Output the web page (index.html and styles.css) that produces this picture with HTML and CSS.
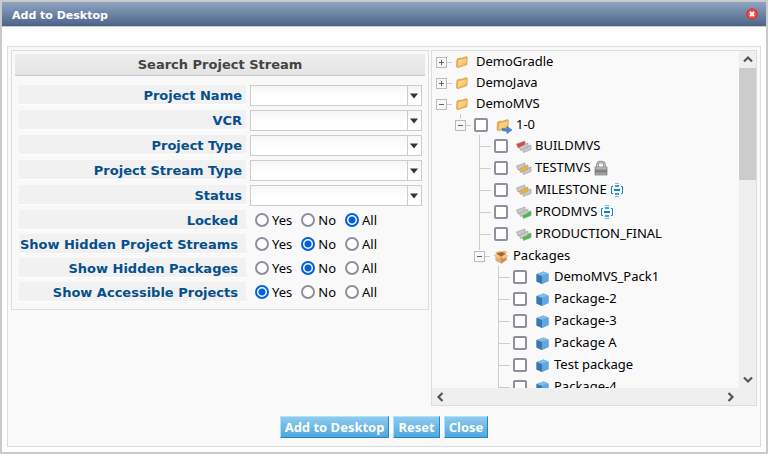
FILE: index.html
```html
<!DOCTYPE html>
<html lang="en">
<head>
<meta charset="utf-8">
<title>Add to Desktop</title>
<link rel="stylesheet" href="styles.css">
</head>
<body>
<svg class="sprites" aria-hidden="true">
  <defs>
    <linearGradient id="gFolder" x1="0" y1="0" x2="1" y2="1"><stop offset="0" stop-color="#ffe9b0"/><stop offset="1" stop-color="#f0b04c"/></linearGradient>
    <linearGradient id="gLock" x1="0" y1="0" x2="0" y2="1"><stop offset="0" stop-color="#d8d8d8"/><stop offset=".5" stop-color="#777"/><stop offset="1" stop-color="#bbb"/></linearGradient>
    <symbol id="folder" viewBox="0 0 16 16">
      <path d="M2 4 L5 3 L6 3.500 L11.500 1.500 L12 9.500 L3 12.500 L1.500 11.500Z" fill="#eeb65a" stroke="#d99a3c" stroke-width=".7"/>
      <path d="M3 5 L12.500 2.500 L11.500 9.500 L2 12.500Z" fill="url(#gFolder)" stroke="#e0a048" stroke-width=".7"/>
    </symbol>
    <symbol id="folder-link" viewBox="0 0 16 16">
      <path d="M1.500 4 L5 3 L6 3.500 L11.500 1.500 L12 9.500 L3 12.500 L1 11.500Z" fill="#eeb65a" stroke="#d99a3c" stroke-width=".7"/>
      <path d="M3.500 5 L12.500 2.500 L11.500 9.500 L1.500 12.500Z" fill="url(#gFolder)" stroke="#e0a048" stroke-width=".7"/>
      <path d="M6 10.500 L11 11 L11 8.500 L16 12 L11 15.500 L11 13.500 L6 12.500Z" fill="#4a86d8" stroke="#2c62b4" stroke-width=".5"/>
    </symbol>
    <symbol id="bars" viewBox="0 0 16 16">
      <path class="b3" d="M6 9.500 L15 6 V10.500 L7.500 13.500Z"/>
      <path class="b2" d="M3 7.500 L12 4 V8 L4.500 11.500Z"/>
      <path class="b1" d="M.5 5 L9 2 V5.500 L2 9Z"/>
    </symbol>
    <symbol id="cube" viewBox="0 0 16 16">
      <path d="M1.500 4 L8.500 1.500 L13.500 3.500 V11 L7 14 L1.500 11.500Z" fill="#5a9fd8"/>
      <path d="M1.500 4 L8.500 1.500 L13.500 3.500 L7 6Z" fill="#80bdec"/>
      <path d="M1.500 4 L7 6 V14 L1.500 11.500Z" fill="#3a77b0"/>
      <path d="M7 6 L13.500 3.500 V11 L7 14Z" fill="#62a8e0"/>
    </symbol>
    <symbol id="box" viewBox="0 0 16 16">
      <path d="M2.500 6 L7 8 L13.500 6 V11 L8 14.500 L2.500 11.500Z" fill="#e8a565"/>
      <path d="M8 8.500 L13.500 6 V11 L8 14.500Z" fill="#d98b45"/>
      <path d="M3 4.500 L9 2.500 L13 5 L8 8Z" fill="#a8662e"/>
      <path d="M3 5 L8 8 L5.500 9.500 L.5 6.500Z M13 5 L8 8 L10.500 10 L15.500 7Z" fill="#f6c18a"/>
      <path d="M3 4.500 L8 3 L6.500 2 L2 3.500Z M12.500 4.500 L9 3 L11 1.500 L14.500 3Z" fill="#efb076"/>
    </symbol>
    <symbol id="lock" viewBox="0 0 16 16">
      <path d="M4.500 8 V5 Q4.500 2 8 2 Q11.500 2 11.500 5 V8" fill="none" stroke="#888" stroke-width="2.600"/>
      <path d="M4.500 8 V5 Q4.500 2 8 2 Q11.500 2 11.500 5 V8" fill="none" stroke="#ddd" stroke-width=".8"/>
      <rect x="2" y="7" width="12" height="8" fill="url(#gLock)" stroke="#777" stroke-width=".7"/>
    </symbol>
    <symbol id="milestone" viewBox="0 0 16 16">
      <path d="M4 4.500 H2.500 V11.500 H4 M12 4.500 H13.500 V11.500 H12" fill="none" stroke="#1680cc" stroke-width="1"/>
      <path d="M6 1.500 H10 M6 14.500 H10" stroke="#7abbe8"/>
      <path d="M6 4 H10 M6 12 H10" stroke="#3c9de0" stroke-width="2"/>
      <path d="M5 8 H11" stroke="#1680cc" stroke-width="2"/>
    </symbol>
    <symbol id="caret" viewBox="0 0 8 6"><path d="M0 .5 H8 L4 5.500Z" fill="#333"/></symbol>
    <symbol id="up" viewBox="0 0 10 10"><path d="M1 7.500 L5 3.500 L9 7.500" fill="none" stroke="#555" stroke-width="2.200"/></symbol>
  </defs>
</svg>
<main class="window">
  <header class="titlebar">
    <h1>Add to Desktop</h1>
    <button class="close" aria-label="Close window" type="button">
      <svg viewBox="0 0 12 12"><circle cx="6" cy="6" r="5.800" fill="#d8322c"/><circle cx="6" cy="6" r="4.500" fill="#e85550"/><path d="M4 4 L8 8 M8 4 L4 8" stroke="#fff" stroke-width="1.800"/></svg>
    </button>
  </header>
  <form class="panel">
    <div class="columns">
      <section class="search">
        <h2>Search Project Stream</h2>
        <div class="fields">
          <label class="name" for="f1">Project Name</label><div class="combo"><select id="f1"><option></option></select><svg><use href="#caret"/></svg></div>
          <label class="name" for="f2">VCR</label><div class="combo"><select id="f2"><option></option></select><svg><use href="#caret"/></svg></div>
          <label class="name" for="f3">Project Type</label><div class="combo"><select id="f3"><option></option></select><svg><use href="#caret"/></svg></div>
          <label class="name" for="f4">Project Stream Type</label><div class="combo"><select id="f4"><option></option></select><svg><use href="#caret"/></svg></div>
          <label class="name" for="f5">Status</label><div class="combo"><select id="f5"><option></option></select><svg><use href="#caret"/></svg></div>
          <span class="name choice" id="n1">Locked</span><div class="radios" role="radiogroup" aria-labelledby="n1"><label><input type="radio" name="r1">Yes</label><label><input type="radio" name="r1">No</label><label><input type="radio" name="r1" checked>All</label></div>
          <span class="name choice" id="n2">Show Hidden Project Streams</span><div class="radios" role="radiogroup" aria-labelledby="n2"><label><input type="radio" name="r2">Yes</label><label><input type="radio" name="r2" checked>No</label><label><input type="radio" name="r2">All</label></div>
          <span class="name choice" id="n3">Show Hidden Packages</span><div class="radios" role="radiogroup" aria-labelledby="n3"><label><input type="radio" name="r3">Yes</label><label><input type="radio" name="r3" checked>No</label><label><input type="radio" name="r3">All</label></div>
          <span class="name choice" id="n4">Show Accessible Projects</span><div class="radios" role="radiogroup" aria-labelledby="n4"><label><input type="radio" name="r4" checked>Yes</label><label><input type="radio" name="r4">No</label><label><input type="radio" name="r4">All</label></div>
        </div>
      </section>
      <section class="browser">
        <div class="view">
          <ul class="tree">
            <li><div class="node"><button type="button" class="toggle plus" aria-label="Expand"></button><svg class="icon"><use href="#folder"/></svg><span class="text wide">DemoGradle</span></div></li>
            <li><div class="node"><button type="button" class="toggle plus" aria-label="Expand"></button><svg class="icon"><use href="#folder"/></svg><span class="text wide">DemoJava</span></div></li>
            <li><div class="node"><button type="button" class="toggle" aria-label="Collapse"></button><svg class="icon"><use href="#folder"/></svg><span class="text wide">DemoMVS</span></div>
              <ul>
                <li><div class="node stem"><button type="button" class="toggle" aria-label="Collapse"></button><label><input type="checkbox"><svg class="icon"><use href="#folder-link"/></svg><span class="text wide">1-0</span></label></div>
                  <ul>
                    <li><div class="node leaf"><label><input type="checkbox"><svg class="icon red"><use href="#bars"/></svg><span class="text">BUILDMVS</span></label></div></li>
                    <li><div class="node leaf"><label><input type="checkbox"><svg class="icon amber"><use href="#bars"/></svg><span class="text">TESTMVS</span></label><svg class="icon"><use href="#lock"/></svg></div></li>
                    <li><div class="node leaf"><label><input type="checkbox"><svg class="icon amber"><use href="#bars"/></svg><span class="text">MILESTONE</span></label><svg class="icon"><use href="#milestone"/></svg></div></li>
                    <li><div class="node leaf"><label><input type="checkbox"><svg class="icon green"><use href="#bars"/></svg><span class="text">PRODMVS</span></label><svg class="icon"><use href="#milestone"/></svg></div></li>
                    <li><div class="node leaf"><label><input type="checkbox"><svg class="icon green"><use href="#bars"/></svg><span class="text">PRODUCTION_FINAL</span></label></div></li>
                    <li><div class="node stem"><button type="button" class="toggle" aria-label="Collapse"></button><svg class="icon"><use href="#box"/></svg><span class="text">Packages</span></div>
                      <ul class="packages">
                        <li><div class="node leaf"><label><input type="checkbox"><svg class="icon"><use href="#cube"/></svg><span class="text">DemoMVS_Pack1</span></label></div></li>
                        <li><div class="node leaf"><label><input type="checkbox"><svg class="icon"><use href="#cube"/></svg><span class="text">Package-2</span></label></div></li>
                        <li><div class="node leaf"><label><input type="checkbox"><svg class="icon"><use href="#cube"/></svg><span class="text">Package-3</span></label></div></li>
                        <li><div class="node leaf"><label><input type="checkbox"><svg class="icon"><use href="#cube"/></svg><span class="text">Package A</span></label></div></li>
                        <li><div class="node leaf"><label><input type="checkbox"><svg class="icon"><use href="#cube"/></svg><span class="text">Test package</span></label></div></li>
                        <li><div class="node leaf"><label><input type="checkbox"><svg class="icon"><use href="#cube"/></svg><span class="text">Package-4</span></label></div></li>
                      </ul>
                    </li>
                  </ul>
                </li>
              </ul>
            </li>
          </ul>
        </div>
        <div class="vbar"><svg><use href="#up"/></svg><div class="track"><div class="thumb"></div></div><svg class="down"><use href="#up"/></svg></div>
        <div class="hbar"><svg class="left"><use href="#up"/></svg><svg class="right"><use href="#up"/></svg></div>
      </section>
    </div>
    <div class="actions"><button type="button">Add to Desktop</button><button type="reset">Reset</button><button type="button">Close</button></div>
  </form>
</main>
</body>
</html>
```
FILE: styles.css
```css
* { box-sizing: border-box; }
body {
  margin: 0;
  height: 100vh;
  padding: 2px;
  background: #cbcbcb;
  font: 13px/20px "Noto Sans", sans-serif;
  color: #000;
}
.sprites { position: absolute; width: 0; height: 0; }
.window { height: 100%; display: flex; flex-direction: column; background: #fff; }
.titlebar {
  display: flex;
  align-items: center;
  justify-content: space-between;
  height: 25px;
  padding: 0 8px 0 10px;
  border-bottom: 1px solid #ccc;
  background: linear-gradient(#90a3c2, #4c6488);
}
h1 { margin: 0; padding-top: 4px; font: bold 11px/20px "DejaVu Sans", sans-serif; color: #fff; }
.close { width: 12px; height: 12px; padding: 0; border: 0; background: none; }
.close svg { display: block; width: 12px; height: 12px; }
.panel {
  flex: 1;
  min-height: 0;
  display: flex;
  flex-direction: column;
  margin: 19px 5px 5px;
  padding: 3px 3px 8px;
  border: 1px solid #ddd;
  background: #f9f9f9;
}
.columns { flex: 1; min-height: 0; display: grid; grid-template-columns: 418px 1fr; gap: 2px; }
.search { align-self: start; padding: 3px; border: 1px solid #ddd; }
h2 {
  margin: 0;
  border-bottom: 1px solid #c8c8c8;
  background: linear-gradient(#ededed, #e4e4e4);
  font: bold 13px/21px "DejaVu Sans", sans-serif;
  color: #444;
  text-align: center;
}
.fields { display: grid; grid-template-columns: 227px 1fr; gap: 4px; padding: 9px 0 4px 4px; }
.name {
  height: 20px;
  padding-right: 4px;
  border-bottom: 1px solid #fff;
  background: #f1f1f1;
  font: bold 13px/21px "DejaVu Sans", sans-serif;
  color: #05508c;
  text-align: right;
}
.choice { padding-right: 8px; }
.combo { position: relative; height: 21px; margin-right: 3px; }
.combo select {
  appearance: none;
  display: block;
  width: 100%;
  height: 21px;
  border: 1px solid #ccc;
  border-radius: 0;
  background: linear-gradient(#f6f6f6, #fff 60%);
}
.combo svg {
  position: absolute;
  top: 1px;
  right: 1px;
  width: 14px;
  height: 19px;
  padding: 7px 3px 6px 2px;
  border-left: 1px solid #ccc;
  pointer-events: none;
}
.radios { display: flex; padding-left: 5px; line-height: 18px; }
.radios label { display: flex; align-items: center; gap: 3px; margin-right: 9px; padding-bottom: 1px; }
input { appearance: none; width: 14px; height: 14px; margin: 0; border: 2px solid #8f8f9d; background: #fff; }
input[type="radio"] { border-radius: 50%; }
input[type="radio"]:checked { border-color: #0060df; background: radial-gradient(#0060df 3px, #fff 4px); }
input[type="checkbox"] { border-radius: 2px; }
.browser {
  min-height: 0;
  display: grid;
  grid-template: 1fr 17px / 1fr 17px;
  border: 1px solid #ddd;
}
.view { min-height: 0; overflow: hidden; white-space: nowrap; }
.tree, .tree ul { margin: 0; padding: 0; list-style: none; }
.tree { padding-left: 4px; }
.tree ul { padding-left: 19px; }
.tree .packages { padding-left: 24px; }
.node { display: flex; align-items: center; height: 21px; position: relative; }
.node label { display: flex; align-items: center; }
.leaf { height: 22px; padding-left: 20px; }
.packages .leaf { padding-left: 15px; }
.leaf::before {
  content: "";
  position: absolute;
  left: 5px;
  top: 0;
  width: 11px;
  height: 22px;
  border-left: 1px solid #ccc;
  background: linear-gradient(#ccc, #ccc) 0 11px / 11px 1px no-repeat;
}
.packages .leaf::before { left: 0; }
.stem::before { content: ""; position: absolute; left: 5px; top: 0; height: 5px; border-left: 1px solid #ccc; }
.toggle {
  position: relative;
  width: 11px;
  height: 11px;
  margin: 2px 8px 0 0;
  padding: 0;
  border: 1px solid #bbb;
  background: linear-gradient(#666, #666) 2px 4px / 5px 1px no-repeat, #f8f8f8;
}
.toggle.plus { background: linear-gradient(#666, #666) 2px 4px / 5px 1px no-repeat, linear-gradient(#666, #666) 4px 2px / 1px 5px no-repeat, #f8f8f8; }
.toggle::after { content: ""; position: absolute; left: 10px; top: 4px; width: 5px; border-top: 1px solid #ccc; }
.icon { width: 16px; height: 16px; margin: 2px 4px 0 0; }
.node label .icon { margin-right: 3px; margin-left: 8px; }
.node label + .icon { margin: 0 0 0 2px; }
.text { padding-bottom: 2px; }
.wide { padding-left: 1px; }
.red, .amber, .green { stroke: #999; stroke-width: .6px; }
.red { --first: #dd4444; }
.amber { --middle: #f5b52c; }
.green { --last: #3cc43c; }
.b1 { fill: var(--first, #c8c8c8); }
.b2 { fill: var(--middle, #c8c8c8); }
.b3 { fill: var(--last, #c8c8c8); }
.vbar, .hbar { display: flex; background: #efefef; }
.vbar { flex-direction: column; align-items: center; }
.vbar svg, .hbar svg { width: 10px; height: 10px; margin: 3px; }
.vbar svg { flex: none; }
.track { flex: 1; width: 17px; padding-top: 1px; }
.thumb { height: 112px; background: #ccc; }
.hbar { grid-column: 1 / 3; align-items: center; justify-content: space-between; padding: 0 17px 0 0; }
.down { transform: rotate(180deg); }
.left { transform: rotate(-90deg); }
.right { transform: rotate(90deg); }
.actions { display: flex; justify-content: center; gap: 4px; padding-top: 10px; }
.actions button {
  height: 22px;
  padding: 0 4px;
  border: 1px solid;
  border-color: #a9e4fb #2585c2 #2585c2 #a9e4fb;
  background: linear-gradient(#90caee, #4da8de);
  font: bold 13px/18px "Noto Sans", sans-serif;
  color: #fff;
}
```
